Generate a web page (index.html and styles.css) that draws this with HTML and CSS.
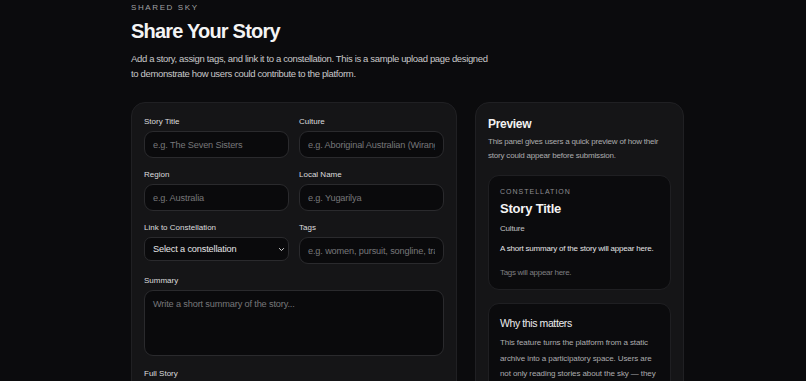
FILE: index.html
```html
<!DOCTYPE html>
<html lang="en">
<head>
<meta charset="utf-8">
<title>Share Your Story</title>
<link rel="stylesheet" href="styles.css">
</head>
<body>
<main class="page">
  <header class="intro">
    <p class="eyebrow">SHARED SKY</p>
    <h1 class="title">Share Your Story</h1>
    <p class="lead">Add a story, assign tags, and link it to a constellation. This is a sample upload page designed to demonstrate how users could contribute to the platform.</p>
  </header>
  <div class="layout">
    <form class="card form-card">
      <div class="grid">
        <div class="field">
          <label class="label">Story Title</label>
          <input class="input" type="text" placeholder="e.g. The Seven Sisters">
        </div>
        <div class="field">
          <label class="label">Culture</label>
          <input class="input" type="text" placeholder="e.g. Aboriginal Australian (Wirangu)">
        </div>
        <div class="field">
          <label class="label">Region</label>
          <input class="input" type="text" placeholder="e.g. Australia">
        </div>
        <div class="field">
          <label class="label">Local Name</label>
          <input class="input" type="text" placeholder="e.g. Yugarilya">
        </div>
        <div class="field">
          <label class="label">Link to Constellation</label>
          <div class="select">
            <span>Select a constellation</span>
            <svg class="chev" viewBox="0 0 10 10" width="7" height="7"><path d="M2 3.5 L5 6.5 L8 3.5" fill="none" stroke="#d8d8d8" stroke-width="1.4" stroke-linecap="round" stroke-linejoin="round"/></svg>
          </div>
        </div>
        <div class="field">
          <label class="label">Tags</label>
          <input class="input" type="text" placeholder="e.g. women, pursuit, songline, travel">
        </div>
        <div class="field wide">
          <label class="label">Summary</label>
          <textarea class="input area" placeholder="Write a short summary of the story..."></textarea>
        </div>
        <div class="field wide full">
          <label class="label">Full Story</label>
          <textarea class="input area tall" placeholder="Write the full story..."></textarea>
        </div>
      </div>
    </form>
    <aside class="card preview-card">
      <h2 class="preview-title">Preview</h2>
      <p class="preview-desc">This panel gives users a quick preview of how their story could appear before submission.</p>
      <div class="inner">
        <p class="inner-eyebrow">CONSTELLATION</p>
        <h3 class="story-title">Story Title</h3>
        <p class="culture">Culture</p>
        <p class="summary">A short summary of the story will appear here.</p>
        <p class="tags">Tags will appear here.</p>
      </div>
      <div class="inner why">
        <h3 class="why-title">Why this matters</h3>
        <p class="why-text">This feature turns the platform from a static archive into a participatory space. Users are not only reading stories about the sky — they are contributing their own.</p>
      </div>
    </aside>
  </div>
</main>
</body>
</html>
```
FILE: styles.css
```css
* { box-sizing: border-box; }
html, body { margin: 0; padding: 0; background: #0b0b0d; }
body {
  font-family: "Liberation Sans", Arial, sans-serif;
  color: #e6e6e6;
  overflow: hidden;
}
.page { padding: 3px 0 0 131px; }
.intro { width: 366px; }
.eyebrow {
  margin: 0;
  font-size: 8px;
  line-height: 10px;
  letter-spacing: 1.6px;
  color: #a0a0a3;
}
.title {
  margin: 6px 0 0;
  font-size: 20px;
  line-height: 24px;
  font-weight: 700;
  letter-spacing: -0.8px;
  color: #f4f4f4;
}
.lead {
  margin: 7.5px 0 0;
  font-size: 9.5px;
  line-height: 15px;
  letter-spacing: -0.35px;
  color: #c8c8ca;
}
.layout {
  display: flex;
  align-items: flex-start;
  gap: 18px;
  margin-top: 21.5px;
}
.card {
  background: #151517;
  border: 1px solid #202023;
  border-radius: 14px;
  padding: 12px;
}
.form-card { width: 326px; height: 320px; margin: 0; padding-top: 13px; }
.grid {
  display: grid;
  grid-template-columns: 1fr 1fr;
  column-gap: 10px;
  row-gap: 11px;
}
.field { display: flex; flex-direction: column; min-width: 0; }
.wide { grid-column: 1 / -1; }
.full { margin-top: 1px; }
.label {
  font-size: 8px;
  line-height: 12px;
  color: #dcdcde;
  margin-bottom: 3px;
}
.input {
  height: 27px;
  width: 100%;
  background: #0a0a0c;
  border: 1px solid #2a2a2d;
  border-radius: 9px;
  padding: 0 8px;
  font-family: "Liberation Sans", Arial, sans-serif;
  font-size: 9.2px;
  letter-spacing: -0.15px;
  color: #e6e6e6;
  outline: none;
}
.input::placeholder { color: #77777a; }
.area {
  height: 66px;
  padding: 8px;
  resize: none;
  display: block;
}
.tall { height: 100px; }
.select {
  height: 24px;
  background: #0a0a0c;
  border: 1px solid #2a2a2d;
  border-radius: 7px;
  padding: 0 3px 0 8px;
  display: flex;
  align-items: center;
  justify-content: space-between;
  font-size: 9.2px;
  letter-spacing: -0.15px;
  color: #e6e6e8;
}
.chev { display: block; }
.preview-card { width: 209px; height: 320px; }
.preview-title {
  margin: 1px 0 0;
  font-size: 12px;
  line-height: 16px;
  font-weight: 700;
  letter-spacing: -0.3px;
  color: #f2f2f2;
}
.preview-desc {
  margin: 3px 0 0;
  font-size: 8px;
  line-height: 14px;
  letter-spacing: -0.2px;
  color: #acacae;
}
.inner {
  margin-top: 12px;
  background: #0b0b0d;
  border: 1px solid #1f1f22;
  border-radius: 11px;
  padding: 11px 11px 10px;
}
.inner-eyebrow {
  margin: 0;
  font-size: 7px;
  line-height: 10px;
  letter-spacing: 1px;
  color: #8e8e91;
}
.story-title {
  margin: 3px 0 0;
  font-size: 13px;
  line-height: 18px;
  font-weight: 700;
  letter-spacing: -0.2px;
  color: #f4f4f4;
}
.culture {
  margin: 5px 0 0;
  font-size: 8px;
  line-height: 12px;
  letter-spacing: -0.2px;
  color: #c2c2c4;
}
.summary {
  margin: 8px 0 0;
  font-size: 8px;
  line-height: 12px;
  letter-spacing: -0.2px;
  color: #e4e4e6;
}
.tags {
  margin: 12px 0 0;
  font-size: 8px;
  line-height: 12px;
  letter-spacing: -0.3px;
  color: #7e7e81;
}
.why { margin-top: 13px; padding-top: 12px; }
.why-title {
  margin: 0;
  font-size: 10.5px;
  line-height: 14px;
  font-weight: 400;
  letter-spacing: -0.4px;
  color: #ececee;
}
.why-text {
  margin: 5.25px 0 0;
  font-size: 8px;
  line-height: 15.5px;
  letter-spacing: -0.1px;
  color: #acacae;
}
```
